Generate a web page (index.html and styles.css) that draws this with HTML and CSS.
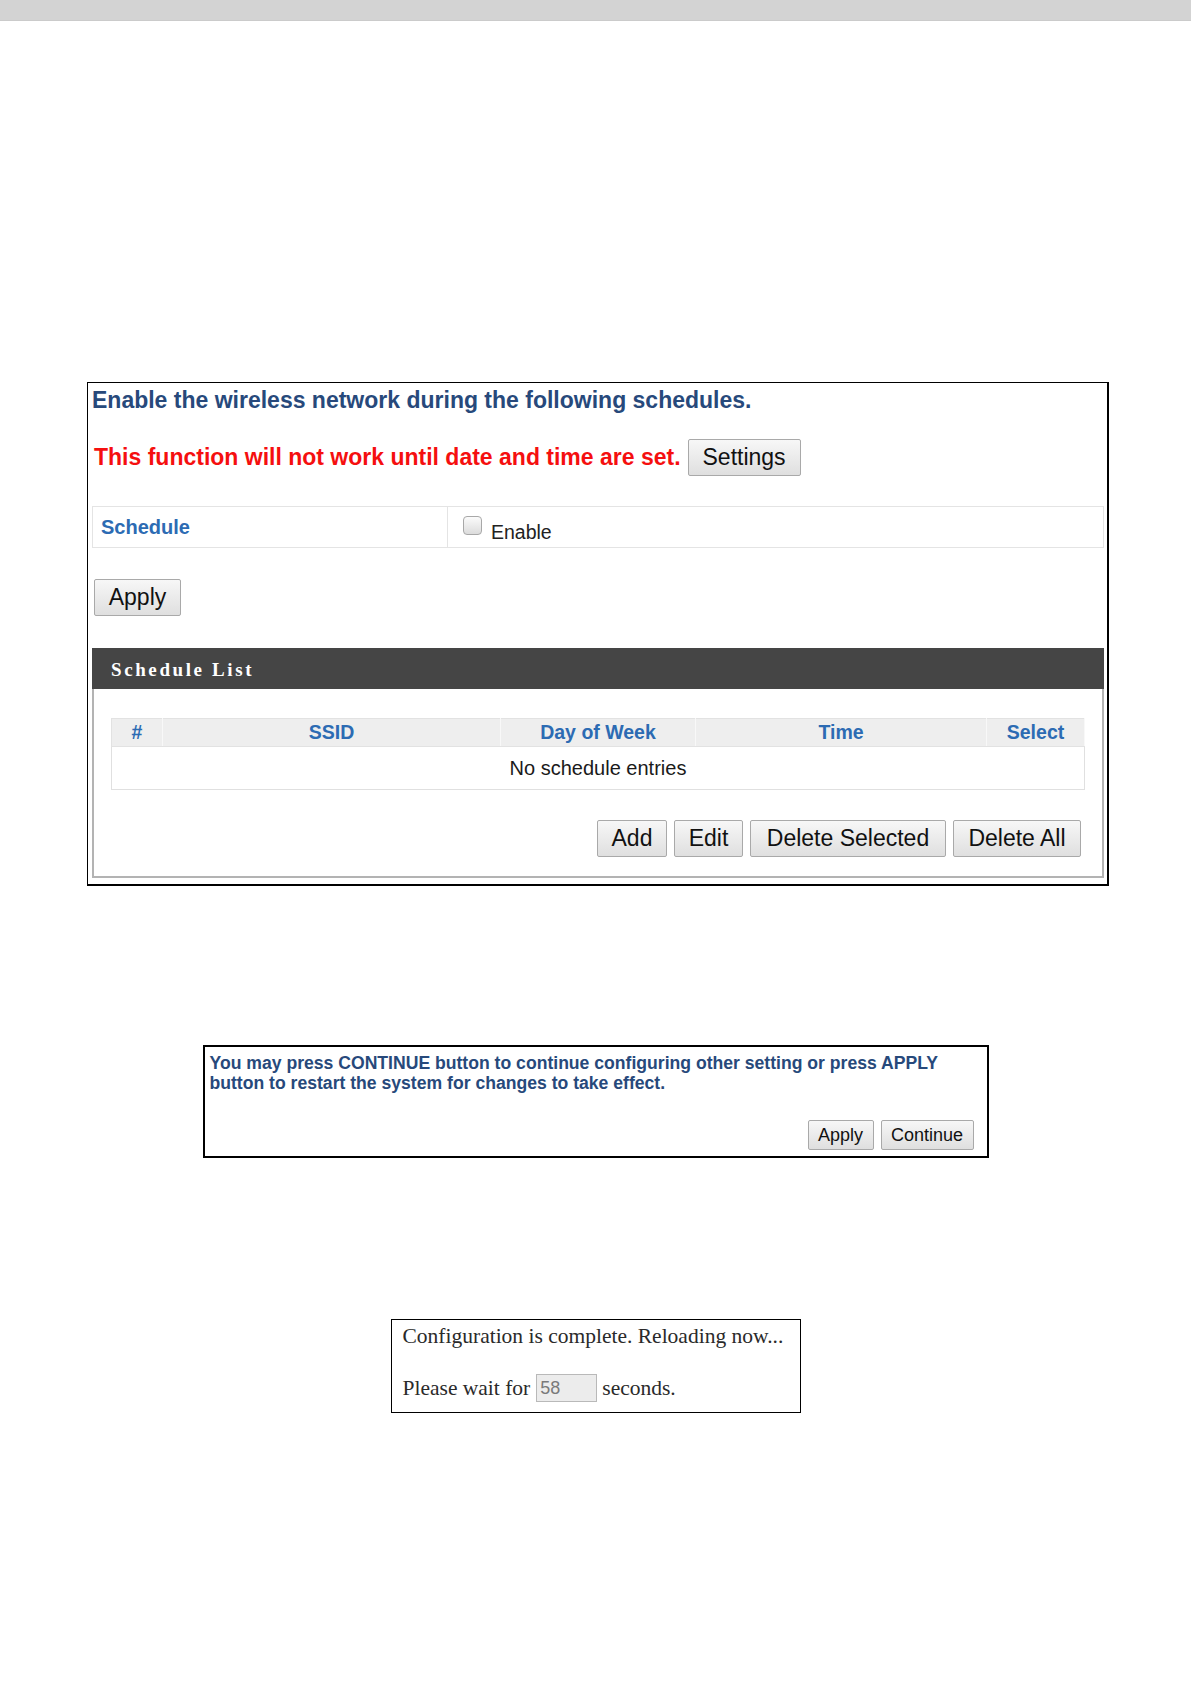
FILE: index.html
```html
<!DOCTYPE html>
<html>
<head>
<meta charset="utf-8">
<link rel="stylesheet" href="styles.css">
</head>
<body>
<div class="topbar"></div>

<div class="panel-schedule">
  <div class="heading">Enable the wireless network during the following schedules.</div>
  <div class="warn-row">
    <span class="warn">This function will not work until date and time are set.</span>
    <button class="btn btn-lg btn-settings">Settings</button>
  </div>
  <div class="field-row">
    <div class="field-label">Schedule</div>
    <div class="field-value">
      <span class="checkbox"></span>
      <span class="enable-text">Enable</span>
    </div>
  </div>
  <div class="apply-row">
    <button class="btn btn-lg btn-apply">Apply</button>
  </div>
  <div class="list-panel">
    <div class="list-header">Schedule List</div>
    <div class="list-body">
      <table class="list-table">
        <thead>
          <tr>
            <th class="c-num">#</th>
            <th class="c-ssid">SSID</th>
            <th class="c-day">Day of Week</th>
            <th class="c-time">Time</th>
            <th class="c-sel">Select</th>
          </tr>
        </thead>
        <tbody>
          <tr><td colspan="5">No schedule entries</td></tr>
        </tbody>
      </table>
      <div class="list-actions">
        <button class="btn btn-lg btn-add">Add</button>
        <button class="btn btn-lg btn-edit">Edit</button>
        <button class="btn btn-lg btn-delsel">Delete Selected</button>
        <button class="btn btn-lg btn-delall">Delete All</button>
      </div>
    </div>
  </div>
</div>

<div class="panel-continue">
  <p class="continue-text">You may press CONTINUE button to continue configuring other setting or press APPLY button to restart the system for changes to take effect.</p>
  <div class="continue-actions">
    <button class="btn btn-sm btn-apply2">Apply</button>
    <button class="btn btn-sm btn-continue">Continue</button>
  </div>
</div>

<div class="panel-reload">
  <div class="reload-line1">Configuration is complete. Reloading now...</div>
  <div class="reload-line2">
    <span>Please wait for</span>
    <span class="count">58</span>
    <span>seconds.</span>
  </div>
</div>
</body>
</html>
```

FILE: styles.css
```css
* { box-sizing: border-box; }
html, body { margin: 0; padding: 0; background: #ffffff; }
body { font-family: "Liberation Sans", Arial, sans-serif; width: 1191px; height: 1684px; overflow: hidden; }

.topbar {
  height: 21px;
  background: #d3d3d3;
  border-bottom: 1px solid #cbcbcb;
}

/* ---------- panel 1 ---------- */
.panel-schedule {
  margin: 361px 0 0 87px;
  width: 1022px;
  height: 504px;
  border-style: solid;
  border-color: #000;
  border-width: 1px 2px 2px 1px;
  padding: 3px 2px 0 4px;
  display: flex;
  flex-direction: column;
}

.heading {
  font-size: 23px;
  line-height: 28px;
  font-weight: bold;
  color: #27497b;
}

.warn-row {
  margin-top: 25px;
  display: flex;
  align-items: center;
  gap: 7px;
  padding-left: 2px;
}
.warn {
  font-size: 23px;
  font-weight: bold;
  color: #f50f0f;
}

.btn {
  font-family: "Liberation Sans", Arial, sans-serif;
  color: #111;
  background: linear-gradient(#f7f7f7, #dfdfdf);
  border: 1px solid #a9a9a9;
  border-radius: 2px;
  padding: 0;
  margin: 0;
}
.btn-lg { font-size: 23px; height: 37px; }
.btn-settings { width: 113px; }

.field-row {
  margin-top: 30px;
  height: 42px;
  width: 1012px;
  border: 1px solid #e4e4e4;
  display: flex;
}
.field-label {
  width: 355px;
  border-right: 1px solid #e4e4e4;
  display: flex;
  align-items: center;
  padding-left: 8px;
  font-size: 20px;
  font-weight: bold;
  color: #2c6bb3;
}
.field-value {
  display: flex;
  align-items: center;
  padding-left: 15px;
}
.checkbox {
  width: 19px;
  height: 19px;
  border: 1px solid #a8a8a8;
  border-radius: 4px;
  background: linear-gradient(#fbfbfb, #dcdcdc);
  margin-top: -4px;
}
.enable-text {
  margin-left: 9px;
  margin-top: 10px;
  font-size: 19.5px;
  color: #222;
}

.apply-row {
  margin-top: 31px;
  padding-left: 2px;
}
.btn-apply { width: 87px; }

/* ---------- schedule list ---------- */
.list-panel {
  margin-top: 32px;
  width: 1012px;
  height: 230px;
  border: 2px solid #b3b3b3;
  border-top: none;
}
.list-header {
  height: 41px;
  background: #454545;
  color: #fff;
  font-family: "Liberation Serif", "Times New Roman", serif;
  font-weight: bold;
  font-size: 19px;
  letter-spacing: 2.6px;
  display: flex;
  align-items: center;
  padding-left: 19px;
  margin: 0 -2px;
  padding-top: 2px;
}
.list-body {
  padding: 29px 19px 0 17px;
}
.list-table {
  width: 973px;
  border-collapse: collapse;
  table-layout: fixed;
}
.list-table th {
  height: 28px;
  background: #eeeeee;
  border: 1px solid #e2e2e2;
  border-right-color: #f8f8f8;
  font-size: 19.5px;
  font-weight: bold;
  color: #2c6bb3;
  padding: 0;
  text-align: center;
}
.c-num { width: 51px; }
.c-ssid { width: 338px; }
.c-day { width: 195px; }
.c-time { width: 291px; }
.c-sel { width: 98px; }
.list-table td {
  height: 43px;
  border: 1px solid #e0e0e0;
  text-align: center;
  font-size: 20px;
  color: #1a1a1a;
  padding: 0;
}

.list-actions {
  margin-top: 30px;
  display: flex;
  justify-content: flex-end;
  gap: 7px;
  padding-right: 2px;
}
.btn-add { width: 70px; }
.btn-edit { width: 69px; }
.btn-delsel { width: 196px; }
.btn-delall { width: 128px; }

/* ---------- panel 2 ---------- */
.panel-continue {
  margin: 159px auto 0;
  width: 786px;
  height: 113px;
  border: 2px solid #000;
  padding: 6px 13px 6px 5px;
  display: flex;
  flex-direction: column;
  justify-content: space-between;
}
.continue-text {
  margin: 0;
  font-size: 17.6px;
  line-height: 20px;
  font-weight: bold;
  color: #27497b;
}
.continue-actions {
  display: flex;
  justify-content: flex-end;
  gap: 7px;
}
.btn-sm { font-size: 18px; height: 30px; }
.btn-apply2 { width: 66px; }
.btn-continue { width: 93px; }

/* ---------- panel 3 ---------- */
.panel-reload {
  margin: 161px auto 0;
  width: 410px;
  height: 94px;
  border: 1.5px solid #000;
  padding: 4px 0 0 11px;
  font-family: "Liberation Serif", "Times New Roman", serif;
  font-size: 21.5px;
  color: #2a2a2a;
}
.reload-line1 { line-height: 24px; }
.reload-line2 {
  margin-top: 26px;
  display: flex;
  align-items: center;
  gap: 5px;
}
.count {
  width: 61px;
  height: 28px;
  background: #ececec;
  border: 1px solid #b9b9b9;
  font-family: "Liberation Sans", Arial, sans-serif;
  font-size: 18px;
  color: #7a7a7a;
  display: flex;
  align-items: center;
  padding-left: 3px;
  margin-left: 1px;
}
```
